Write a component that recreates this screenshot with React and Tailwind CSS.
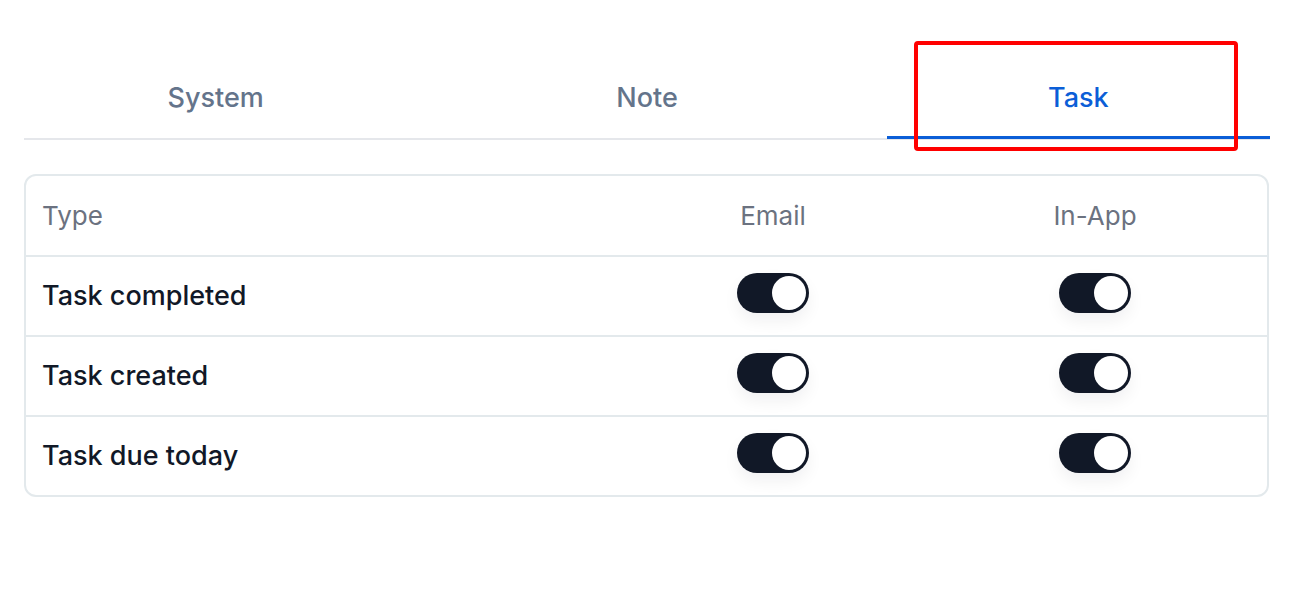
import React from "react";

function Toggle() {
  return (
    <div className="relative w-[72px] h-[40px] mb-[6px] rounded-full bg-[#111827] shadow-[0_8px_16px_rgba(17,24,39,0.06)]">
      <div className="absolute right-[3px] top-[3px] w-[34px] h-[34px] rounded-full bg-white"></div>
    </div>
  );
}

const rows = ["Task completed", "Task created", "Task due today"];

export default function App() {
  return (
    <div
      className="w-[1300px] h-[598px] bg-white relative"
      style={{ fontFamily: "Inter, 'Noto Sans', sans-serif" }}
    >
      <div className="pl-[24px] pt-[58px] pr-[30px]">
        <div className="flex gap-[48px] border-b-2 border-[#e5e7eb]">
          <div className="flex-1 h-[80px] flex items-center justify-center text-[27px] font-medium text-[#64748b]">
            System
          </div>
          <div className="flex-1 h-[80px] flex items-center justify-center text-[27px] font-medium text-[#64748b]">
            Note
          </div>
          <div className="flex-1 h-[80px] flex items-center justify-center text-[27px] font-medium text-[#0b5ed7] relative">
            Task
            <span className="absolute left-0 right-0 bottom-[-1px] h-[3px] bg-[#0b5ed7]"></span>
          </div>
        </div>

        <div className="mt-[34px] border-2 border-[#e3e9ec] rounded-[12px] w-[1245px]">
          <div className="grid grid-cols-[1fr_322px_322px] pl-[16px] pr-[11px] h-[79px] items-center text-[26px] text-[#6b7280]">
            <div>Type</div>
            <div className="text-center">Email</div>
            <div className="text-center">In-App</div>
          </div>
          {rows.map((r) => (
            <div
              key={r}
              className="grid grid-cols-[1fr_322px_322px] pl-[16px] pr-[11px] h-[80px] items-center border-t-2 border-[#e3e9ec]"
            >
              <div className="text-[27px] font-medium text-[#111827]">{r}</div>
              <div className="flex justify-center">
                <Toggle />
              </div>
              <div className="flex justify-center">
                <Toggle />
              </div>
            </div>
          ))}
        </div>
      </div>

      <div className="absolute left-[914px] top-[41px] w-[324px] h-[110px] border-4 border-[#ff0000] rounded-[4px]"></div>
    </div>
  );
}
